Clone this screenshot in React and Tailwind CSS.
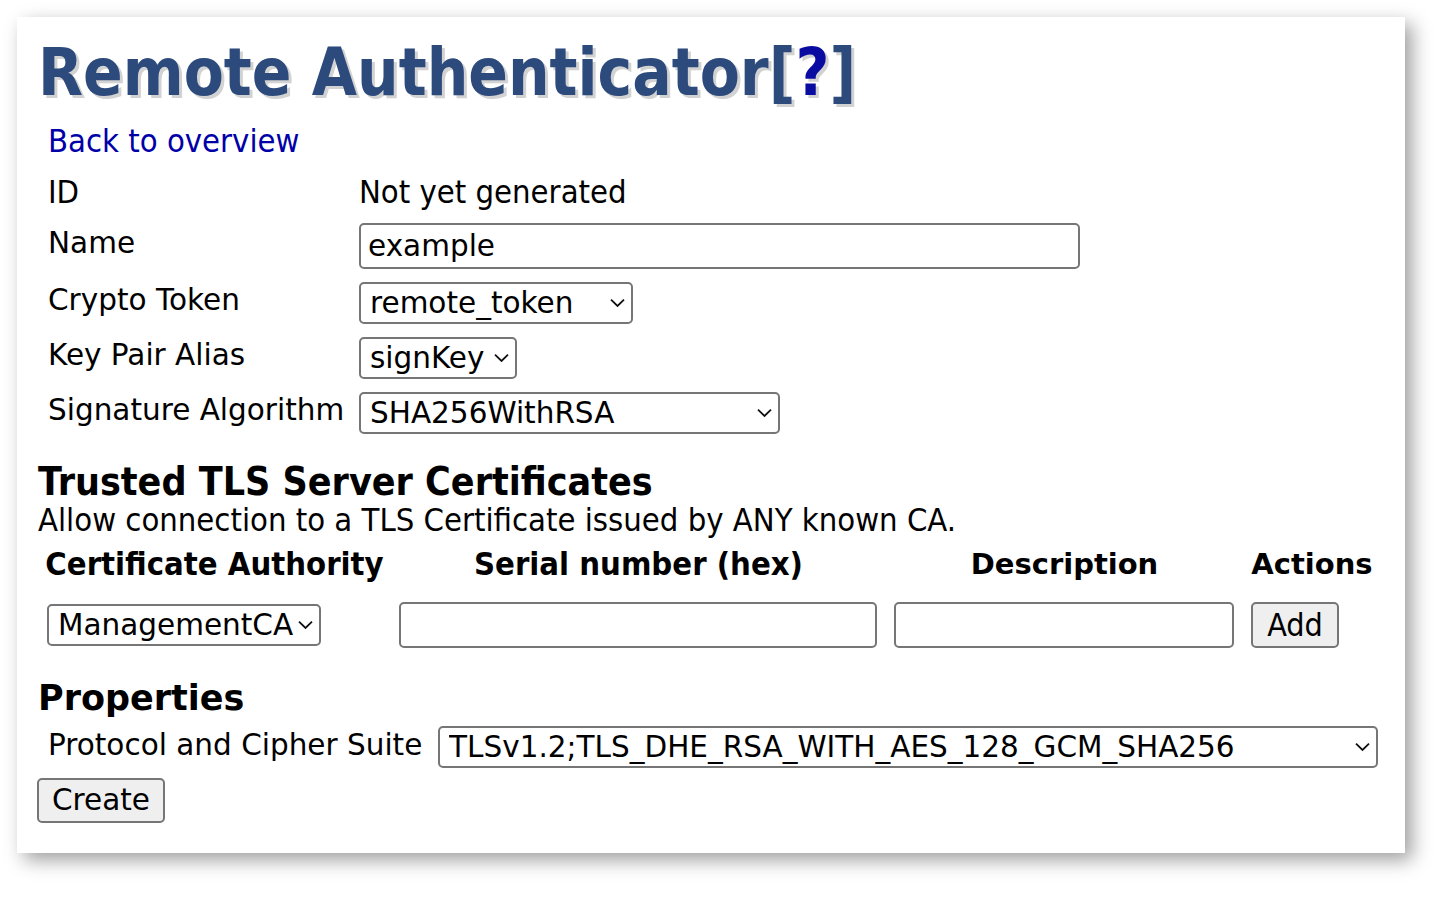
import React from 'react';

const verdana = "font-['DejaVu_Sans',Verdana,sans-serif]";
const tahoma = "font-['DejaVu_Sans_Condensed','DejaVu_Sans',Tahoma,sans-serif]";

const Chevron = () => (
    <svg width="15" height="9" viewBox="0 0 15 9" className="pointer-events-none absolute right-[8px] top-1/2 -translate-y-1/2 bg-white">
        <path d="M1 1.2 L7.5 7.5 L14 1.2" fill="none" stroke="#111" strokeWidth="1.8" />
    </svg>
);

const Select = ({ value, width }) => (
    <div className="relative" style={{ width }}>
        <select
            defaultValue={value}
            className={`${verdana} h-[42px] w-full appearance-none rounded-[5px] border-2 border-[#767676] bg-white py-0 pl-[9px] pr-[14px] text-[29.5px] leading-[normal] text-black`}
        >
            <option>{value}</option>
        </select>
        <Chevron />
    </div>
);

const Row = ({ label, children }) => (
    <div className="flex items-center">
        <div className={`${verdana} -mt-[5px] w-[311px] shrink-0 text-[29.5px] leading-none text-black`}>{label}</div>
        {children}
    </div>
);

export default function App() {
    return (
        <div className="min-h-screen bg-white p-[17px]">
            <div className="h-[836px] w-[1388px] bg-white pl-[21px] pt-[9px] shadow-[7px_7px_18px_rgba(0,0,0,0.38)]">
                {/* Title */}
                <h1 className={`${tahoma} h-[94px] text-[65px] font-bold leading-[94px] text-[#2c4a7c] [text-shadow:3px_3px_0_#d2d2d2]`}>
                    Remote Authenticator[<span className="text-[#0a0ba0]">?</span>]
                </h1>

                <div className="pl-[10px]">
                    <div className="flex h-[40px] items-center pt-[2px]">
                        <a href="#" className={`${tahoma} text-[32.5px] leading-none text-[#0000a8]`}>Back to overview</a>
                    </div>

                    {/* Form */}
                    <div className="mt-[14px] flex flex-col gap-[13px]">
                        <div className="flex h-[36px] items-center">
                            <div className={`${tahoma} w-[311px] shrink-0 text-[32.5px] leading-none`}>ID</div>
                            <div className={`${tahoma} text-[32.5px] leading-none`}>Not yet generated</div>
                        </div>
                        <Row label="Name">
                            <input
                                defaultValue="example"
                                className={`${verdana} h-[46px] w-[721px] rounded-[5px] border-2 border-[#767676] px-[7px] text-[29.5px] leading-none text-black outline-none`}
                            />
                        </Row>
                        <Row label="Crypto Token">
                            <Select value="remote_token" width={274} />
                        </Row>
                        <Row label="Key Pair Alias">
                            <Select value="signKey" width={158} />
                        </Row>
                        <Row label="Signature Algorithm">
                            <Select value="SHA256WithRSA" width={421} />
                        </Row>
                    </div>
                </div>

                {/* Trusted TLS Server Certificates */}
                <h2 className={`${tahoma} mt-[28px] text-[39px] font-bold leading-[40px] text-black`}>Trusted TLS Server Certificates</h2>
                <p className={`${tahoma} text-[32.5px] leading-[36px] text-black`}>Allow connection to a TLS Certificate issued by ANY known CA.</p>

                <div className="mt-[6px] grid grid-cols-[353px_495px_357px_138px]">
                    <div className={`${tahoma} flex h-[40px] items-center justify-center text-[32.5px] font-bold leading-none`}>Certificate Authority</div>
                    <div className={`${tahoma} flex h-[40px] items-center justify-center text-[32.5px] font-bold leading-none`}>Serial number (hex)</div>
                    <div className={`${verdana} flex h-[40px] items-center justify-center text-[29px] font-bold leading-none`}>Description</div>
                    <div className={`${verdana} flex h-[40px] items-center justify-center text-[29px] font-bold leading-none`}>Actions</div>

                    <div className="mt-[18px] flex h-[46px] items-center pl-[9px]">
                        <Select value="ManagementCA" width={274} />
                    </div>
                    <div className="mt-[18px] flex h-[46px] items-center pl-[8px]">
                        <input className="h-[46px] w-[478px] rounded-[5px] border-2 border-[#767676] outline-none" />
                    </div>
                    <div className="mt-[18px] flex h-[46px] items-center pl-[8px]">
                        <input className="h-[46px] w-[340px] rounded-[5px] border-2 border-[#767676] outline-none" />
                    </div>
                    <div className="mt-[18px] flex h-[46px] items-center pl-[8px]">
                        <button className={`${tahoma} h-[46px] w-[88px] rounded-[5px] border-2 border-[#767676] bg-[#efefef] text-[32px] leading-none text-black`}>Add</button>
                    </div>
                </div>

                {/* Properties */}
                <h2 className={`${verdana} mt-[30px] text-[35px] font-bold leading-[40px] text-black`}>Properties</h2>
                <div className="mt-[8px] flex items-center pl-[10px]">
                    <div className={`${verdana} -mt-[3px] w-[390px] shrink-0 text-[29.5px] leading-none`}>Protocol and Cipher Suite</div>
                    <Select value="TLSv1.2;TLS_DHE_RSA_WITH_AES_128_GCM_SHA256" width={940} />
                </div>
                <button className={`${verdana} mt-[10px] h-[45px] w-[128px] -ml-[1px] rounded-[5px] border-2 border-[#767676] bg-[#efefef] text-[29.5px] leading-none text-black`}>Create</button>
            </div>
        </div>
    );
}
